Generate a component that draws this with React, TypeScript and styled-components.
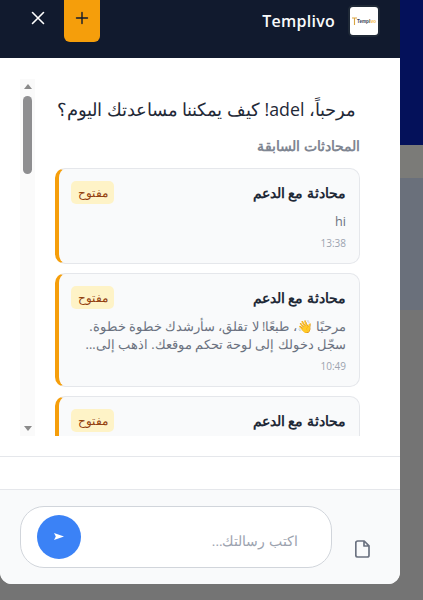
import React from "react";
import styled, { createGlobalStyle } from "styled-components";

const Global = createGlobalStyle`
  html, body { margin: 0; padding: 0; height: 600px; overflow: hidden; }
  body { font-family: "Open Sans", "Noto Sans", "Liberation Sans", sans-serif; }
  #root { height: 600px; }
`;

const Page = styled.div`
  width: 423px;
  height: 600px;
  overflow: hidden;
  background: linear-gradient(
    180deg,
    #04115a 0,
    #04115a 145px,
    #7b7b78 145px,
    #7b7b78 178px,
    #6a707b 178px,
    #6a707b 310px,
    #747474 310px
  );
`;

const Panel = styled.div`
  width: 400px;
  height: 584px;
  display: flex;
  flex-direction: column;
  background: #fff;
  border-radius: 0 0 12px 12px;
  overflow: hidden;
`;

const Header = styled.header`
  height: 58px;
  flex: none;
  background: #111a2e;
  display: flex;
  align-items: flex-start;
  justify-content: space-between;
  padding: 0 20px 0 27px;
`;

const HeaderActions = styled.div`
  display: flex;
  align-items: flex-start;
  gap: 15px;
`;

const CloseButton = styled.button`
  width: 22px;
  height: 36px;
  padding: 0;
  border: 0;
  background: none;
  color: #fff;
  display: flex;
  align-items: center;
  justify-content: center;
`;

const NewButton = styled.button`
  box-sizing: border-box;
  width: 36px;
  height: 42px;
  padding: 0 0 6px;
  border: 0;
  border-radius: 0 0 6px 6px;
  background: #f59e0b;
  color: #111a2e;
  display: flex;
  align-items: center;
  justify-content: center;
`;

const Brand = styled.div`
  display: flex;
  align-items: center;
  gap: 13px;
  padding-top: 5px;
`;

const BrandName = styled.span`
  font-size: 16px;
  font-weight: 600;
  letter-spacing: 0.25px;
  color: #f9fafb;
`;

const LogoBox = styled.div`
  width: 28px;
  height: 28px;
  background: #fff;
  border: 2px solid #1f2937;
  border-radius: 5px;
  display: flex;
  align-items: center;
  justify-content: center;
`;

const Body = styled.main`
  height: 399px;
  flex: none;
  display: flex;
  gap: 20px;
  padding: 21px 40px 0 20px;
  box-sizing: border-box;
  border-bottom: 1px solid #e5e7eb;
`;

const ScrollTrack = styled.div`
  width: 15px;
  height: 357px;
  flex: none;
  background: #fafafa;
  display: flex;
  flex-direction: column;
  align-items: center;
  justify-content: space-between;
  position: relative;
`;

const ScrollThumb = styled.div`
  position: absolute;
  top: 17px;
  left: 3px;
  width: 9px;
  height: 78px;
  border-radius: 5px;
  background: #8e8e90;
`;

const Arrow = styled.div<{ $down?: boolean }>`
  width: 0;
  height: 0;
  margin: 5px 0;
  border-left: 4.5px solid transparent;
  border-right: 4.5px solid transparent;
  ${(p) => (p.$down ? "border-top: 5px solid #8a8a8a;" : "border-bottom: 5px solid #8a8a8a;")}
`;

const Content = styled.div`
  flex: 1;
  height: 357px;
  overflow: hidden;
  direction: rtl;
`;

const Greeting = styled.h2`
  margin: 0;
  padding: 18px 4px 0 0;
  font-size: 17.8px;
  line-height: 24px;
  font-weight: 500;
  color: #1f2937;
`;

const SectionLabel = styled.h3`
  margin: 15px 0 0;
  font-size: 14px;
  line-height: 20px;
  font-weight: 600;
  color: #7f8692;
`;

const Cards = styled.div`
  margin-top: 12px;
  display: flex;
  flex-direction: column;
  gap: 9px;
`;

const Card = styled.article<{ $cut?: boolean }>`
  box-sizing: border-box;
  background: #f9fafb;
  border: 1px solid #e5e7eb;
  border-left: 4px solid #f59e0b;
  border-radius: 10px;
  padding: 12px 13px 13px 12px;
  ${(p) => (p.$cut ? "min-height: 90px;" : "")}
`;

const CardTop = styled.div`
  display: flex;
  align-items: center;
  justify-content: space-between;
`;

const CardTitle = styled.div`
  font-size: 14.4px;
  line-height: 20px;
  font-weight: 600;
  color: #1f2937;
`;

const Badge = styled.span`
  background: #fef3c7;
  color: #92400e;
  font-size: 12px;
  line-height: 17px;
  padding: 3px 6.5px;
  border-radius: 5px;
`;

const Preview = styled.p`
  margin: 8px 0 0;
  font-size: 12.7px;
  line-height: 18px;
  color: #6b7280;
`;

const Time = styled.div`
  margin-top: 6px;
  font-size: 10px;
  line-height: 14px;
  color: #9ca3af;
`;

const Gap = styled.div`
  height: 32px;
  flex: none;
`;

const Footer = styled.footer`
  flex: 1;
  background: #f9fafb;
  border-top: 1px solid #e5e7eb;
  display: flex;
  align-items: flex-start;
  justify-content: space-between;
  padding: 16px 30px 0 20px;
`;

const InputShell = styled.div`
  box-sizing: border-box;
  width: 312px;
  height: 62px;
  background: #fff;
  border: 1px solid #d1d5db;
  border-radius: 24px;
  display: flex;
  align-items: flex-start;
  justify-content: space-between;
  padding: 8px 33px 0 16px;
`;

const SendButton = styled.button`
  width: 44px;
  height: 44px;
  padding: 0;
  border: 0;
  border-radius: 50%;
  background: #3b82f6;
  display: flex;
  align-items: center;
  justify-content: center;
`;

const Placeholder = styled.span`
  direction: rtl;
  font-size: 13.5px;
  line-height: 20px;
  color: #9ca3af;
  margin-top: 16px;
`;

const Attach = styled.button`
  width: 16px;
  height: 18px;
  margin-top: 34px;
  padding: 0;
  border: 0;
  background: none;
`;

const LogoText = styled.text`
  font-family: "Liberation Sans", sans-serif;
  font-size: 4.6px;
  font-weight: 700;
`;

export default function App() {
  return (
    <Page>
      <Global />
      <Panel>
        <Header>
          <HeaderActions>
            <CloseButton aria-label="close">
              <svg width="14" height="14" viewBox="0 0 14 14"><path d="M1.5 1.5l11 11M12.5 1.5l-11 11" stroke="currentColor" strokeWidth="1.6" strokeLinecap="round" /></svg>
            </CloseButton>
            <NewButton aria-label="new">
              <svg width="14" height="14" viewBox="0 0 14 14"><path d="M7 1.5v11M1.5 7h11" stroke="currentColor" strokeWidth="1.4" strokeLinecap="round" /></svg>
            </NewButton>
          </HeaderActions>
          <Brand>
            <BrandName>Templivo</BrandName>
            <LogoBox>
              <svg width="27" height="10" viewBox="0 0 27 10">
                <path d="M1 2h5M3.5 2v7" stroke="#d9a441" strokeWidth="1.1" />
                <LogoText x="6" y="6.8" fill="#334155">Templ</LogoText>
                <LogoText x="18.4" y="6.8" fill="#f5b942">ivo</LogoText>
              </svg>
            </LogoBox>
          </Brand>
        </Header>
        <Body>
          <ScrollTrack>
            <Arrow />
            <ScrollThumb />
            <Arrow $down />
          </ScrollTrack>
          <Content>
            <Greeting>مرحباً، adel! كيف يمكننا مساعدتك اليوم؟</Greeting>
            <SectionLabel>المحادثات السابقة</SectionLabel>
            <Cards>
              <Card>
                <CardTop>
                  <CardTitle>محادثة مع الدعم</CardTitle>
                  <Badge>مفتوح</Badge>
                </CardTop>
                <Preview>hi</Preview>
                <Time>13:38</Time>
              </Card>
              <Card>
                <CardTop>
                  <CardTitle>محادثة مع الدعم</CardTitle>
                  <Badge>مفتوح</Badge>
                </CardTop>
                <Preview>مرحبًا 👋، طبعًا! لا تقلق، سأرشدك خطوة خطوة. سجّل دخولك إلى لوحة تحكم موقعك. اذهب إلى...</Preview>
                <Time>10:49</Time>
              </Card>
              <Card $cut>
                <CardTop>
                  <CardTitle>محادثة مع الدعم</CardTitle>
                  <Badge>مفتوح</Badge>
                </CardTop>
              </Card>
            </Cards>
          </Content>
        </Body>
        <Gap />
        <Footer>
          <InputShell>
            <SendButton aria-label="send">
              <svg width="12" height="10" viewBox="0 0 12 10"><path d="M1 1L11 4.5 1 8 2.8 4.5z" fill="#fff" /></svg>
            </SendButton>
            <Placeholder>اكتب رسالتك...</Placeholder>
          </InputShell>
          <Attach aria-label="attach">
            <svg width="15" height="18" viewBox="0 0 15 18"><path d="M2.6 1h6.6l4.8 4.8v9.4a1.8 1.8 0 0 1-1.8 1.8H2.6a1.8 1.8 0 0 1-1.8-1.8V2.8A1.8 1.8 0 0 1 2.6 1zM9 1v5h5" fill="none" stroke="#6b7280" strokeWidth="1.7" strokeLinejoin="round" /></svg>
          </Attach>
        </Footer>
      </Panel>
    </Page>
  );
}
